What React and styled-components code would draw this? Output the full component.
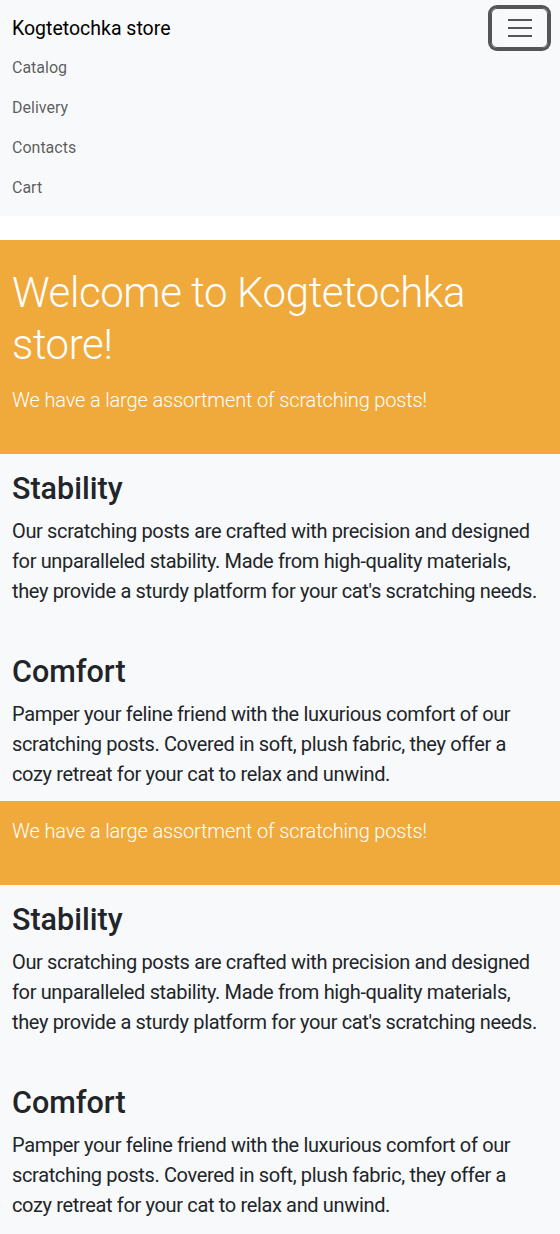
import styled, { createGlobalStyle } from 'styled-components';

const GlobalStyle = createGlobalStyle`
    * { box-sizing: border-box; }
    body {
        margin: 0;
        background: #ffffff;
        font-family: Roboto, "Liberation Sans", sans-serif;
        color: #212529;
    }
`;

const Navbar = styled.nav`
    background-color: #f8f9fa;
    padding: 8px 12px;
`;

const NavTop = styled.div`
    display: flex;
    align-items: center;
    justify-content: space-between;
    height: 40px;
`;

const Brand = styled.a`
    font-size: 19.5px;
    color: #000;
    text-decoration: none;
    line-height: 30px;
    margin-top: 2px;
`;

const Toggler = styled.button`
    width: 57px;
    height: 40px;
    border: 1px solid #555;
    border-radius: 6px;
    box-shadow: 0 0 0 3px #555;
    background: transparent;
    display: flex;
    flex-direction: column;
    align-items: center;
    justify-content: center;
    gap: 6px;
    padding: 0;
`;

const Bar = styled.span`
    display: block;
    width: 24px;
    height: 2px;
    background: #555;
`;

const NavList = styled.ul`
    list-style: none;
    margin: 0;
    padding: 0;
    display: flex;
    flex-direction: column;
`;

const NavLink = styled.a`
    display: block;
    padding: 8px 0;
    line-height: 24px;
    font-size: 16px;
    color: rgba(0, 0, 0, 0.65);
    text-decoration: none;
`;

const Main = styled.main`
    margin-top: 24px;
    padding-bottom: 6px;
    background-color: #f8f9fa;
`;

const Banner = styled.section`
    background-color: #f0a93b;
    color: #fff;
    padding: ${p => (p.$hero ? '27px' : '15px')} 12px 39px;
`;

const Display = styled.h1`
    margin: 0 0 14px;
    font-size: 42px;
    font-weight: 300;
    letter-spacing: -0.4px;
    line-height: 52px;
`;

const Lead = styled.p`
    margin: 0;
    font-size: 20px;
    font-weight: 300;
    letter-spacing: -0.15px;
    line-height: 30px;
`;

const Features = styled.section`
    display: flex;
    flex-direction: column;
    gap: 48px;
    padding: 17px 12px 12px;
`;

const Feature = styled.div``;

const FeatureTitle = styled.h2`
    margin: 0 0 9px;
    font-size: 30.5px;
    font-weight: 500;
    line-height: 36px;
`;

const FeatureText = styled.p`
    margin: 0;
    font-size: 20px;
    letter-spacing: -0.35px;
    line-height: 30px;
`;

const links = ['Catalog', 'Delivery', 'Contacts', 'Cart'];

const features = [
    {
        title: 'Stability',
        text: "Our scratching posts are crafted with precision and designed for unparalleled stability. Made from high-quality materials, they provide a sturdy platform for your cat's scratching needs.",
    },
    {
        title: 'Comfort',
        text: 'Pamper your feline friend with the luxurious comfort of our scratching posts. Covered in soft, plush fabric, they offer a cozy retreat for your cat to relax and unwind.',
    },
];

const FeatureList = () => (
    <Features>
        {features.map(f => (
            <Feature key={f.title}>
                <FeatureTitle>{f.title}</FeatureTitle>
                <FeatureText>{f.text}</FeatureText>
            </Feature>
        ))}
    </Features>
);

const App = () => {
    return (
        <>
            <GlobalStyle />
            <Navbar>
                <NavTop>
                    <Brand href="#">Kogtetochka store</Brand>
                    <Toggler aria-label="Toggle navigation">
                        <Bar />
                        <Bar />
                        <Bar />
                    </Toggler>
                </NavTop>
                <NavList>
                    {links.map(l => (
                        <li key={l}><NavLink href="#">{l}</NavLink></li>
                    ))}
                </NavList>
            </Navbar>
            <Main>
                <Banner $hero>
                    <Display>Welcome to Kogtetochka store!</Display>
                    <Lead>We have a large assortment of scratching posts!</Lead>
                </Banner>
                <FeatureList />
                <Banner>
                    <Lead>We have a large assortment of scratching posts!</Lead>
                </Banner>
                <FeatureList />
            </Main>
        </>
    );
};

export default App;
